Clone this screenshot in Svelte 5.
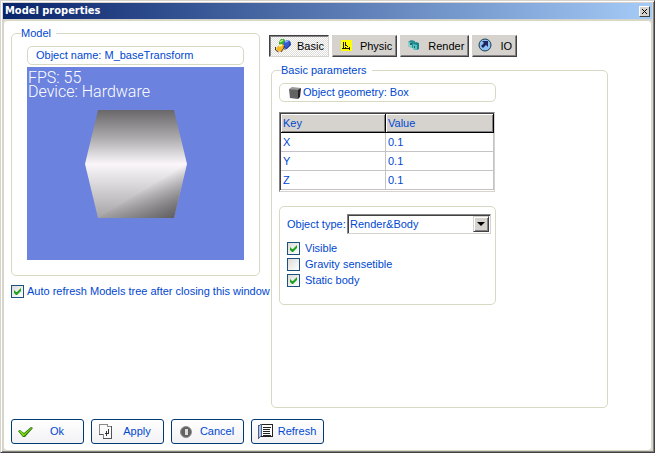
<script>
  let autoRefresh = $state(true);
  let activeTab = $state('Basic');
  let objectType = $state('Render&Body');
  const tabs = ['Basic', 'Physic', 'Render', 'IO'];
  const actions = ['Ok', 'Apply', 'Cancel', 'Refresh'];
  const rows = [
    { key: 'X', value: '0.1' },
    { key: 'Y', value: '0.1' },
    { key: 'Z', value: '0.1' }
  ];
  let flags = $state([
    { label: 'Visible', on: true },
    { label: 'Gravity sensetible', on: false },
    { label: 'Static body', on: true }
  ]);
</script>

{#snippet icon(name)}
  {#if name === 'Basic'}
    <svg class="icon" width="18" height="16" viewBox="0 0 18 16" aria-hidden="true">
      <path d="M5 4 7 1h3l2 3-1 3-4 1-2-2Z" fill="#3cae32" />
      <path d="m6 4 3-2" stroke="#b8f58c" stroke-width="1.5" />
      <path d="m10 4 3-2 3 1 1 4-4 4-3-1-1-3Z" fill="#3659d5" />
      <path d="m11 4 3-1" stroke="#8fb2ff" stroke-width="1.5" />
      <path d="M16 4v3l-4 4h-2" fill="none" stroke="#1b2768" stroke-width=".8" />
      <path d="m4 8 3-2 3 1v3l-3 4-3-1-2-2Z" fill="#f6b623" />
      <path d="m5 8 3-1" stroke="#fff39b" stroke-width="2" />
      <path d="M1.500 9v3l3 2M10 8v2l-3 4" stroke="#3c2b12" fill="none" stroke-width=".9" />
    </svg>
  {:else if name === 'Physic'}
    <svg class="icon" width="18" height="16" viewBox="0 0 18 16" shape-rendering="crispEdges" aria-hidden="true">
      <path d="M4 2h11v11H4z" fill="#ff0" />
      <path d="M6 4h1v6h6v1H5v-1h1zM8 4h1v3h1v1H8zM10 8h1v1h-1zM8 9h1v1H8zM12 9h1v3h-1z" fill="#171700" />
    </svg>
  {:else if name === 'Render'}
    <svg class="icon" width="18" height="16" viewBox="0 0 18 16" aria-hidden="true">
      <path d="m3 4 3-2 4 1v6l-3 1-4-2z" fill="#298e92" />
      <path d="m3 4 4 1v5l-4-2z" fill="#8bd0cf" />
      <path d="m8 6 3-2 3 1v6l-2 1-4-1z" fill="#16868d" />
      <path d="m8 6 4 1v5l-4-1z" fill="#5bc2c0" />
      <path d="M5 5h2v2H5zM9 8h1v2H9z" fill="#176b78" />
    </svg>
  {:else if name === 'IO'}
    <svg class="icon" width="18" height="16" viewBox="0 0 18 16" aria-hidden="true">
      <circle cx="8" cy="7" r="6" fill="#8fc1f4" stroke="#153f4c" />
      <path d="M5 3h6v6L9 7l-3 3-2-2 3-3z" fill="#20265f" />
    </svg>
  {:else if name === 'Ok'}
    <svg class="icon" width="18" height="18" viewBox="0 0 18 18" aria-hidden="true">
      <path d="m1 8 2-1 4 3 7-6 2 1-8 9H6z" fill="#277014" />
      <path d="m2 8 2 0 3 3 7-6 1 0-8 8H6z" fill="#80e00b" />
    </svg>
  {:else if name === 'Apply'}
    <svg class="icon" width="18" height="18" viewBox="0 0 18 18" shape-rendering="crispEdges" aria-hidden="true">
      <path d="M2.500 1.500h8v2h4v12h-8v-4h-4z" fill="#fafafa" stroke="#888" />
      <path d="M14.500 3v12.500H6M2 11.500h4" fill="none" stroke="#555" />
      <path d="M11.500 6v4.500H8M9.500 8v5" fill="none" stroke="#333" />
    </svg>
  {:else if name === 'Cancel'}
    <svg class="icon" width="18" height="18" viewBox="0 0 18 18" aria-hidden="true">
      <circle cx="9" cy="9" r="5.500" fill="#626262" stroke="#929292" />
      <path d="M8 6h3v6H8z" fill="#ddd" />
    </svg>
  {:else}
    <svg class="icon" width="18" height="18" viewBox="0 0 18 18" shape-rendering="crispEdges" aria-hidden="true">
      <path d="M5 1h11v13H4z" fill="#222" />
      <path d="M5 2h10v11H5z" fill="#fff" />
      <path d="m1 2 4-1v12l-4 3z" fill="#52617f" />
      <path d="m2 3 2-1v11l-2 1z" fill="#acc5ed" />
      <path d="M6 4.500h8M6 6.500h7M6 8.500h7M6 10.500h7M6 12.500h8" stroke="#222" />
    </svg>
  {/if}
{/snippet}

<main class="window">
  <header>
    <h1>Model properties</h1>
    <button class="close" aria-label="Close">
      <svg width="7" height="7" viewBox="0 0 7 7"><path d="m1 1 5 5M6 1 1 6" stroke="#000" /></svg>
    </button>
  </header>
  <div class="client">
    <div class="columns">
      <div class="left">
        <fieldset class="group model">
          <legend>Model</legend>
          <div class="panel name">Object name: M_baseTransform</div>
          <div class="viewport">
            <div>FPS: 55</div>
            <div>Device: Hardware</div>
            <svg class="cube" width="102" height="108" viewBox="0 0 102 108" role="img" aria-label="Box preview">
              <defs>
                <linearGradient id="top" x1="0" y1="0" x2="0" y2="1">
                  <stop stop-color="#696769" /><stop offset=".5" stop-color="#aaa8aa" /><stop offset="1" stop-color="#faf6fa" />
                </linearGradient>
                <linearGradient id="bottom" x1="0" y1="0" x2="0" y2="1">
                  <stop stop-color="#faf6fa" /><stop offset=".35" stop-color="#dddadd" /><stop offset="1" stop-color="#a5a3a5" />
                </linearGradient>
                <linearGradient id="shade" gradientUnits="userSpaceOnUse" x1="57" y1="79" x2="78" y2="116">
                  <stop stop-color="#666" stop-opacity="0" /><stop offset="1" stop-color="#5d5b5d" />
                </linearGradient>
              </defs>
              <path d="M13 0h76l13 54H0z" fill="url(#top)" />
              <path d="M0 54h102l-13 54H13z" fill="url(#bottom)" />
              <path d="M102 54 89 108H13z" fill="url(#shade)" />
            </svg>
          </div>
        </fieldset>
        <label class="check"><input type="checkbox" bind:checked={autoRefresh} /><span>Auto refresh Models tree after closing this window</span></label>
      </div>
      <div class="right">
        <div class="tabs" role="tablist">
          {#each tabs as tab}
            <button role="tab" class="tab" class:active={activeTab === tab} aria-selected={activeTab === tab} onclick={() => (activeTab = tab)}>
              {@render icon(tab)}<span>{tab}</span>
            </button>
          {/each}
        </div>
        <fieldset class="group basic">
          <legend>Basic parameters</legend>
          <div class="panel geometry">
            <svg width="14" height="14" viewBox="0 0 14 14" aria-hidden="true">
              <path d="m1 3 3-2 9 1-2 3z" fill="#999" /><path d="m1 3 9 1v9l-8-1z" fill="#626262" /><path d="m10 4 3-2-1 9-2 2z" fill="#222" />
            </svg>
            Object geometry: Box
          </div>
          <div class="grid">
            <table>
              <thead><tr><th>Key</th><th>Value</th></tr></thead>
              <tbody>
                {#each rows as row}<tr><td>{row.key}</td><td>{row.value}</td></tr>{/each}
              </tbody>
            </table>
          </div>
          <div class="options">
            <div class="type">
              <label for="type">Object type:</label>
              <div class="select">
                <select id="type" bind:value={objectType}><option>Render&amp;Body</option><option>Render</option><option>Body</option></select>
                <span class="arrow"></span>
              </div>
            </div>
            {#each flags as flag}
              <label class="check"><input type="checkbox" bind:checked={flag.on} /><span>{flag.label}</span></label>
            {/each}
          </div>
        </fieldset>
      </div>
    </div>
    <footer>
      {#each actions as action}
        <button class="action">{@render icon(action)}<span>{action}</span></button>
      {/each}
    </footer>
  </div>
</main>

<style>
  :global(body) { background: #d6d3ce; }
  * { box-sizing: border-box; }
  .window {
    display: flex;
    flex-direction: column;
    min-height: 100vh;
    padding: 1px;
    border: 1px solid #d6d3ce;
    border-right-color: #424142;
    border-bottom-color: #424142;
    background: #d6d3ce;
    box-shadow: inset 1px 1px #fff, inset -1px -1px #848284;
    color: #0048d0;
    font: 11px/13px "Liberation Sans", Arial, sans-serif;
  }
  button, select { font: inherit; color: inherit; }
  header {
    display: flex;
    align-items: center;
    justify-content: space-between;
    height: 16px;
    margin: 1px 1px 0;
    padding: 0 2px;
    background: linear-gradient(90deg, #08246b, #a5cbf7);
  }
  h1 { margin: 0; color: #fff; font: bold 11px/16px "DejaVu Sans Condensed", Tahoma, sans-serif; }
  .close {
    display: grid;
    place-items: center;
    width: 11px;
    height: 11px;
    padding: 0;
    border: 1px solid;
    border-color: #fff #424142 #424142 #fff;
    background: #d6d3ce;
  }
  .client {
    display: flex;
    flex: 1;
    flex-direction: column;
    margin: 1px 1px 0 1px;
    padding: 12px 8px 6px 7px;
    border: 1px solid #d8d9c2;
    border-radius: 4px;
    background: #fff;
  }
  .columns { display: flex; flex: 1; gap: 4px; }
  .left { flex: 0 0 254px; min-width: 0; }
  .right { flex: 1; min-width: 0; padding-top: 2px; }
  fieldset { min-width: 0; margin: 0; padding: 0; }
  .group { border: 1px solid #d8d9c2; border-radius: 5px; }
  legend { height: 1px; padding: 0 5px 0 0; line-height: 1px; }
  .model { width: 249px; height: 243px; padding: 12px 15px; }
  .model legend { margin-left: -6px; }
  .panel {
    display: flex;
    align-items: center;
    width: 217px;
    height: 19px;
    padding: 0 8px;
    border: 1px solid #d8d9c2;
    border-radius: 5px;
  }
  .viewport {
    position: relative;
    height: 193px;
    margin-top: 2px;
    padding: 4px 1px;
    background: #6b82de;
    color: #fff;
    font-family: Roboto, "Liberation Sans", sans-serif;
    font-size: 16px;
    font-weight: 300;
    line-height: 14px;
  }
  .cube { position: absolute; top: 43px; left: 58px; }
  .check { display: flex; align-items: center; gap: 5px; height: 16px; white-space: nowrap; }
  .left .check { gap: 3px; margin-top: 7px; }
  input {
    appearance: none;
    flex: none;
    width: 13px;
    height: 13px;
    margin: 0;
    border: 1px solid #1c5180;
    background: linear-gradient(135deg, #dcdcd7, #fff);
  }
  input:checked {
    background: url("data:image/svg+xml,%3Csvg xmlns='http://www.w3.org/2000/svg' width='11' height='11'%3E%3Cpath d='M2 4v3l2 2h1l4-4V2L5 6H4z' fill='%2321a121'/%3E%3C/svg%3E"), linear-gradient(135deg, #dcdcd7, #fff);
  }
  .tabs { display: flex; gap: 3px; }
  .tab {
    display: flex;
    align-items: center;
    gap: 5px;
    height: 22px;
    padding: 0 4px;
    border: 1px solid;
    border-color: #d6d3ce #424142 #424142 #d6d3ce;
    background: #d6d3ce;
    box-shadow: inset -1px -1px #848284;
    color: #000;
  }
  .tab.active {
    border-color: #424142 #d6d3ce #d6d3ce #424142;
    background: repeating-conic-gradient(#dedcd8 0 25%, #fff 0 50%) 0 0 / 2px 2px;
    box-shadow: inset 1px 1px #848284;
  }
  .icon { flex: none; }
  .basic { width: 337px; height: 338px; margin: 13px 0 0 2px; padding: 12px 7px; }
  .basic legend { margin-left: 2px; }
  .geometry { gap: 1px; }
  .grid {
    width: 216px;
    margin-top: 10px;
    padding-bottom: 1px;
    border: 1px solid;
    border-color: #848284 #d6d3ce #d6d3ce #848284;
  }
  table { width: 100%; border-collapse: separate; border-spacing: 0; table-layout: fixed; border: 1px solid #424142; border-width: 1px 0 0 1px; }
  th, td { height: 19px; padding: 0 2px; border: solid #c6c3c6; border-width: 0 1px 1px 0; font-weight: inherit; text-align: left; }
  th { border-color: #000; background: #d6d3ce; box-shadow: inset 1px 1px #fff, inset -1px -1px #848284; }
  th:first-child { width: 105px; }
  .options { width: 217px; height: 99px; margin-top: 14px; padding: 7px 4px 7px 7px; border: 1px solid #d8d9c2; border-radius: 5px; }
  .type { display: flex; align-items: center; justify-content: space-between; margin-bottom: 6px; white-space: nowrap; }
  .select { position: relative; width: 144px; }
  select {
    appearance: none;
    display: block;
    width: 100%;
    height: 20px;
    padding: 0 2px;
    border: 1px solid;
    border-color: #848284 #d6d3ce #d6d3ce #848284;
    border-radius: 0;
    background: #fff;
    box-shadow: inset 1px 1px #424142;
  }
  .arrow {
    position: absolute;
    top: 2px;
    right: 2px;
    display: grid;
    place-items: center;
    width: 16px;
    height: 16px;
    border: 1px solid;
    border-color: #d6d3ce #424142 #424142 #d6d3ce;
    background: #d6d3ce;
    box-shadow: inset 1px 1px #fff, inset -1px -1px #848284;
    pointer-events: none;
  }
  .arrow::after { content: ""; border: 4px solid transparent; border-top-color: #000; border-bottom: 0; }
  footer { display: flex; gap: 7px; }
  .action {
    display: flex;
    align-items: center;
    width: 73px;
    height: 25px;
    padding: 0 4px 0 5px;
    border: 1px solid #003c74;
    border-radius: 3px;
    background: linear-gradient(#fff, #f2f1f4);
  }
  .action span { flex: 1; text-align: center; }
</style>
